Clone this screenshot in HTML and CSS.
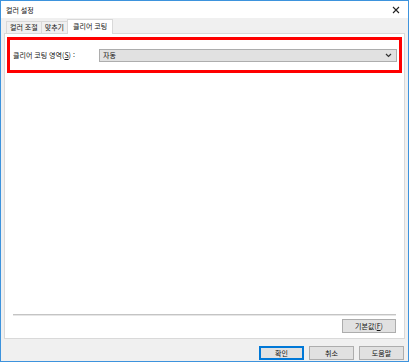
FILE: index.html
```html
<!DOCTYPE html>
<html lang="ko">
<head>
<meta charset="utf-8">
<link rel="stylesheet" href="styles.css">
</head>
<body>
<div class="window">
  <div class="titlebar">
    <span class="title">컬러 설정</span>
    <svg class="close" width="8" height="8" viewBox="0 0 8 8"><path d="M1 1L7 7M7 1L1 7" stroke="#222" stroke-width="1.1" fill="none"/></svg>
  </div>
  <div class="content">
    <div class="tabs">
      <div class="tab">컬러 조절</div>
      <div class="tab">맞추기</div>
      <div class="tab active">클리어 코팅</div>
    </div>
    <div class="panel">
      <div class="highlight">
        <span class="label">클리어 코팅 영역(<u>S</u>) :</span>
        <div class="select">
          <span>자동</span>
          <svg width="7" height="5" viewBox="0 0 7 5"><path d="M1 1L3.5 3.5L6 1" stroke="#333" stroke-width="1.2" fill="none"/></svg>
        </div>
      </div>
      <div class="spacer"></div>
      <div class="rule"></div>
      <div class="defaults">
        <button class="btn wide">기본값(<u>F</u>)</button>
      </div>
    </div>
    <div class="footer">
      <button class="btn primary">확인</button>
      <button class="btn">취소</button>
      <button class="btn">도움말</button>
    </div>
  </div>
</div>
</body>
</html>
```
FILE: styles.css
```css
html, body {
  margin: 0;
  padding: 0;
}
body {
  width: 409px;
  height: 362px;
  font-family: "Noto Sans CJK KR", "Noto Sans", sans-serif;
  font-size: 7px;
  color: #111;
}
.window {
  box-sizing: border-box;
  width: 409px;
  height: 362px;
  border: 1px solid #3d93dd;
  background: #f0f0f0;
  display: flex;
  flex-direction: column;
}
.titlebar {
  height: 17px;
  background: #fff;
  display: flex;
  align-items: center;
  justify-content: space-between;
  padding: 0 8px 0 5px;
  flex: none;
}
.title {
  font-size: 7px;
  line-height: 10px;
}
.close {
  display: block;
}
.content {
  flex: 1;
  display: flex;
  flex-direction: column;
  padding: 0 3px;
}
.tabs {
  display: flex;
  align-items: flex-end;
  height: 14px;
  margin-top: 1px;
  padding-left: 2px;
  position: relative;
  z-index: 1;
}
.tab {
  box-sizing: border-box;
  height: 12px;
  padding: 0 3px;
  border: 1px solid #d9d9d9;
  border-bottom: none;
  margin-right: -1px;
  font-size: 7px;
  line-height: 11px;
  background: #f0f0f0;
}
.tab.active {
  height: 15px;
  margin-bottom: -1px;
  background: #fff;
  padding: 0 5px;
  line-height: 13px;
}
.panel {
  box-sizing: border-box;
  height: 306px;
  background: #fff;
  border: 1px solid #d9d9d9;
  display: flex;
  flex-direction: column;
  padding: 3px 2px 5px 2px;
}
.highlight {
  box-sizing: border-box;
  height: 36px;
  border: 3px solid #f00;
  display: flex;
  align-items: center;
  padding: 0 2px 0 2px;
}
.label {
  width: 86px;
  flex: none;
  font-size: 7px;
  padding-left: 1px;
}
.label u, .btn u {
  text-decoration: underline;
}
.select {
  box-sizing: border-box;
  flex: 1;
  height: 13px;
  background: #e1e1e1;
  border: 1px solid #adadad;
  display: flex;
  align-items: center;
  justify-content: space-between;
  padding: 0 4px 0 3px;
  font-size: 7px;
}
.select svg {
  display: block;
}
.spacer {
  flex: 1;
}
.rule {
  height: 0;
  border-top: 1px solid #c4c4c4;
  border-bottom: 1px solid #e6e6e6;
  margin: 0 6px 0 6px;
}
.defaults {
  display: flex;
  justify-content: flex-end;
  margin-top: 3px;
  padding-right: 6px;
}
.btn {
  box-sizing: border-box;
  width: 45px;
  height: 14px;
  margin: 0;
  padding: 0;
  background: #e1e1e1;
  border: 1px solid #adadad;
  font-family: "Noto Sans CJK KR", "Noto Sans", sans-serif;
  font-size: 7px;
  line-height: 12px;
  color: #111;
}
.btn.wide {
  width: 54px;
}
.btn.primary {
  border: 2px solid #0078d7;
  line-height: 10px;
}
.footer {
  display: flex;
  justify-content: flex-end;
  gap: 5px;
  padding-top: 7px;
  padding-right: 1px;
}
```
